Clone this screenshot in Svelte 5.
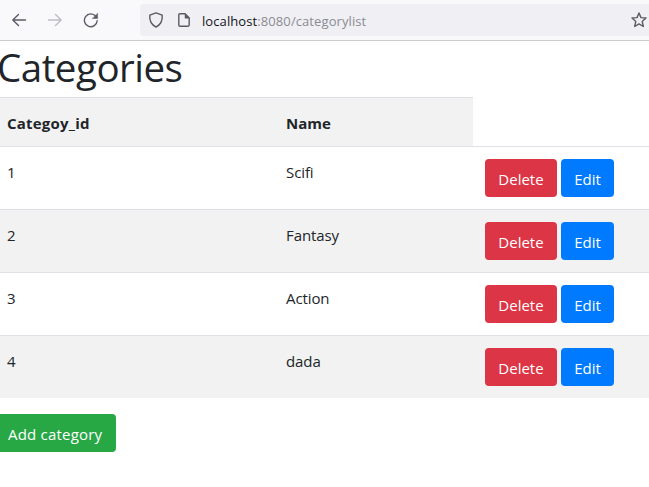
<script>
  const categories = [
    { id: 1, name: 'Scifi' },
    { id: 2, name: 'Fantasy' },
    { id: 3, name: 'Action' },
    { id: 4, name: 'dada' }
  ];
</script>

<div class="window">
  <header class="toolbar">
    <nav class="nav">
      <svg width="16" height="16" viewBox="0 0 16 16" class="icon"><path d="M14.5 8H1.8M7.5 2.5L1.8 8l5.7 5.5" /></svg>
      <svg width="16" height="16" viewBox="0 0 16 16" class="icon off"><path d="M1.5 8h12.7M8.5 2.5L14.2 8l-5.7 5.5" /></svg>
      <svg width="16" height="16" viewBox="0 0 16 16" class="icon"><path d="M14.2 8.8A6.4 6.4 0 1 1 12.8 4.3" /><path class="solid" d="M14.6 1.5v5H9.6z" /></svg>
    </nav>
    <div class="address">
      <svg width="16" height="16" viewBox="0 0 16 16" class="icon"><path d="M8 .9L1.8 3.2C1.3 8.4 3.5 12.6 8 15.1c4.5-2.5 6.7-6.7 6.2-11.9z" /></svg>
      <svg width="12" height="14" viewBox="0 0 12 14" class="icon page"><path d="M2 .8h5l4.2 4.3v7q0 1.1-1.1 1.1H2Q.8 13.2.8 12V2Q.8.8 2 .8z" /><path class="solid" d="M7 .8v4.4h4.3z" /></svg>
      <span class="url"><b>localhost</b>:8080/categorylist</span>
      <svg width="16" height="16" viewBox="0 0 16 16" class="icon star"><path d="M8 1l2 4.6 5 .4-3.8 3.4 1.1 5.1L8 11.9l-4.3 2.6 1.1-5.1L1 6l5-.4z" /></svg>
    </div>
  </header>

  <main>
    <h1>Categories</h1>
    <table>
      <colgroup><col class="c1" /><col class="c2" /><col /></colgroup>
      <thead>
        <tr><th><span class="idhead">Categoy_id</span></th><th>Name</th></tr>
      </thead>
      <tbody>
        {#each categories as category (category.id)}
          <tr>
            <td>{category.id}</td>
            <td class="name">{category.name}</td>
            <td class="actions">
              <div><button class="btn danger">Delete</button><button class="btn primary">Edit</button></div>
            </td>
          </tr>
        {/each}
      </tbody>
    </table>
    <button class="btn success">Add category</button>
  </main>
</div>

<style>
  .window {
    width: 649px;
    height: 487px;
    overflow: hidden;
    background: #fff;
    color: #212529;
    font: 15px/24px "Open Sans", "Noto Sans", sans-serif;
  }
  .toolbar {
    box-sizing: border-box;
    height: 41px;
    display: flex;
    align-items: center;
    padding-left: 11px;
    background: #f9f9fb;
    border-bottom: 1px solid #ccccd0;
  }
  .nav {
    display: flex;
    flex: none;
    gap: 20px;
    width: 129px;
  }
  .icon {
    flex: none;
    fill: none;
    stroke: #5b5b66;
    stroke-width: 1.4;
    stroke-linecap: round;
    stroke-linejoin: round;
  }
  .icon .solid { fill: #5b5b66; stroke-width: 0.5; }
  .off { stroke: #bdbdc2; }
  .address {
    display: flex;
    align-items: center;
    box-sizing: border-box;
    flex: none;
    width: 509px;
    height: 32px;
    padding-left: 8px;
    background: #f0f0f4;
    border-radius: 4px 0 0 4px;
  }
  .page { margin-left: 14px; }
  .url {
    flex: none;
    margin-left: 12px;
    padding-top: 1px;
    font-size: 13px;
    letter-spacing: 0.09px;
    color: #8b8b92;
    width: 429px;
    white-space: nowrap;
  }
  .url b { font-weight: 400; color: #15141a; }
  main { margin-left: -5px; }
  h1 {
    margin: 0;
    height: 56px;
    padding: 1px 0 0 2px;
    box-sizing: border-box;
    font-size: 38.5px;
    line-height: 50px;
    font-weight: 400;
    letter-spacing: -0.5px;
  }
  table {
    width: 654px;
    table-layout: fixed;
    border-collapse: separate;
    border-spacing: 0;
  }
  .c1 { width: 279px; }
  .c2 { width: 199px; }
  th, td {
    box-sizing: border-box;
    padding: 13px 12px 11px;
    border-top: 1px solid #dee2e6;
    text-align: left;
    vertical-align: top;
  }
  th {
    height: 49px;
    background: #f2f2f2;
    font-weight: 700;
  }
  .idhead { letter-spacing: 0.22px; }
  td { height: 63px; }
  .name { letter-spacing: -0.1px; }
  tbody tr:nth-child(even) td { background: #f2f2f2; }
  .actions { padding: 12px; }
  .actions div { display: flex; gap: 4px; }
  .btn {
    display: block;
    box-sizing: border-box;
    height: 38px;
    padding: 8px 0 6px;
    border: 0;
    border-radius: 4px;
    font: inherit;
    color: #fff;
    text-align: center;
  }
  .danger { width: 72px; background: #dc3545; }
  .primary { width: 53px; background: #007bff; }
  .success {
    width: 121px;
    margin-top: 16px;
    padding-left: 13px;
    text-align: left;
    letter-spacing: 0.2px;
    background: #28a745;
  }
</style>
